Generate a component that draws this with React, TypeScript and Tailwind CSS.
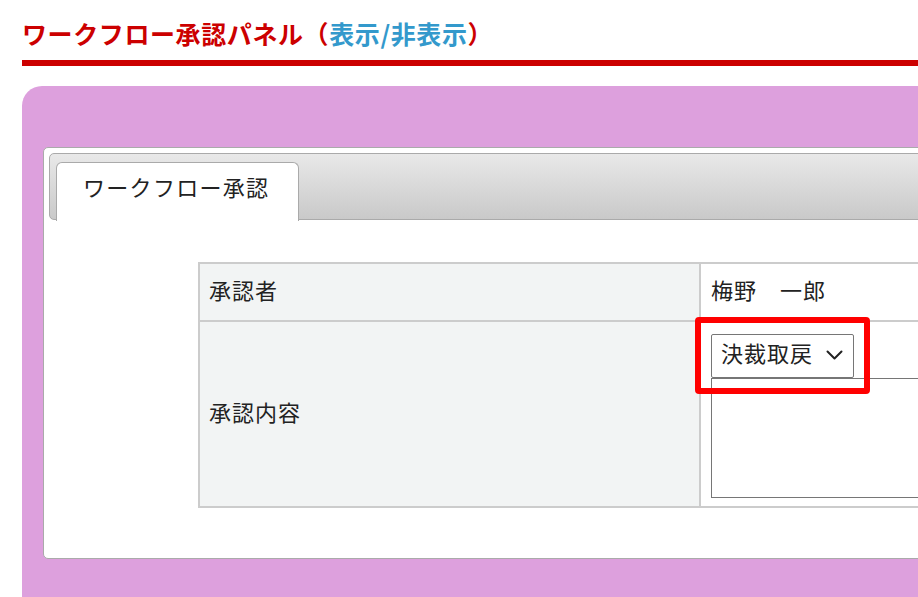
const jp = { fontFamily: '"Noto Sans CJK JP", "Noto Sans", sans-serif' }

export default function App() {
  return (
    <div className="h-[597px] w-[918px] overflow-hidden bg-white text-[#222]" style={jp}>
      <h1 className="pl-[22px] pt-[15px] text-[25px] font-bold leading-[36px] tracking-[0.6px] text-[#cc0000]">
        ワークフロー承認パネル（<span className="text-[#3399cc]">表示/非表示</span>）
      </h1>
      <div className="ml-[22px] mt-[9px] h-[6px] bg-[#cc0000]" />

      <div className="ml-[22px] mt-[20px] h-[600px] w-[1000px] rounded-tl-[20px] bg-[#dda0dd] pl-[21px] pt-[61px]">
        <div className="h-[412px] w-[960px] rounded-[5px] border border-[#aaa] bg-white p-[5px]">
          {/* tab strip */}
          <div className="relative h-[67px] rounded-[5px] border border-[#aaa] bg-gradient-to-b from-[#e9e9e9] to-[#c9c9c9]">
            <div className="absolute left-[6px] top-[8px] flex h-[59px] w-[243px] items-start rounded-t-[6px] border border-b-0 border-[#aaa] bg-white pl-[26px] pt-[7px] text-[22px] leading-[32px] tracking-[1.3px]">
              ワークフロー承認
            </div>
          </div>

          {/* table */}
          <div className="ml-[149px] mt-[42px] w-[900px] border-2 border-[#ccc] text-[22px] tracking-[1px]">
            <div className="flex h-[58px] border-b-2 border-[#ccc]">
              <div className="flex w-[499px] shrink-0 items-center bg-[#f2f4f4] pb-[6px] pl-[9px]">承認者</div>
              <div className="flex flex-1 items-center border-l-2 border-[#ccc] pb-[6px] pl-[10px]">梅野　一郎</div>
            </div>
            <div className="flex h-[184px]">
              <div className="flex w-[499px] shrink-0 items-center bg-[#f2f4f4] pb-[6px] pl-[9px]">承認内容</div>
              <div className="flex-1 border-l-2 border-[#ccc] pl-[10px] pt-[12px]">
                <div className="relative w-[143px]">
                  <div className="flex h-[44px] w-[143px] items-center justify-between rounded-[2px] border border-[#767676] bg-white pl-[9px] pr-[10px]">
                    <span className="mb-[8px]">決裁取戻</span>
                    <svg className="mb-[3px]" width="17" height="10" viewBox="0 0 17 10" fill="none">
                      <polyline points="1.5,1.5 8.5,8.5 15.5,1.5" stroke="#222" strokeWidth="2" strokeLinecap="round" strokeLinejoin="round" />
                    </svg>
                  </div>
                  <div className="absolute -left-[16px] -top-[17px] h-[77px] w-[175px] rounded-[4px] border-[6px] border-[#ff0000]" />
                </div>
                <div className="h-[120px] w-[400px] border border-[#767676] bg-white" />
              </div>
            </div>
          </div>
        </div>
      </div>
    </div>
  )
}
